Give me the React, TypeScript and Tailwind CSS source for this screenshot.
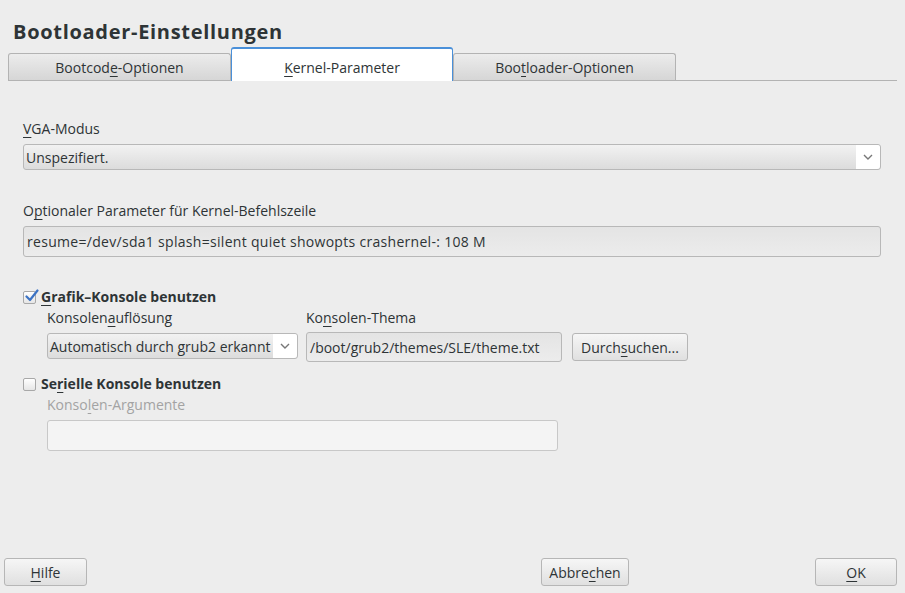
import React from 'react';

const font = { fontFamily: '"Open Sans", "DejaVu Sans", sans-serif' };

// Underlined mnemonic letter
const U: React.FC<{ children: React.ReactNode }> = ({ children }) => (
  <span className="underline decoration-1 underline-offset-[3px]">{children}</span>
);

const Chevron = () => (
  <svg width="10" height="6" viewBox="0 0 10 6" className="text-[#777]">
    <path d="M1 1 L5 5 L9 1" fill="none" stroke="currentColor" strokeWidth="1.4" />
  </svg>
);

const Combo: React.FC<{ text: string; className?: string }> = ({ text, className }) => (
  <div
    className={`flex h-[26px] items-stretch rounded-[3px] border border-[#b8b8b8] bg-gradient-to-b from-[#f2f2f2] to-[#dcdcdc] ${className ?? ''}`}
  >
    <div className="flex flex-1 items-center pl-[2px] text-[#2e3436]">{text}</div>
    <div className="flex w-[24px] items-center justify-center rounded-r-[3px] bg-white">
      <Chevron />
    </div>
  </div>
);

const Button: React.FC<{ children: React.ReactNode; className?: string }> = ({ children, className }) => (
  <button
    className={`flex h-[28px] items-center justify-center rounded-[3px] border border-[#b6b6b6] bg-gradient-to-b from-[#f6f6f6] to-[#e0e0e0] text-[#2e3436] ${className ?? ''}`}
  >
    {children}
  </button>
);

const Tab: React.FC<{ active?: boolean; children: React.ReactNode }> = ({ active, children }) =>
  active ? (
    <div className="-mb-px flex h-[34px] w-[222px] items-center justify-center rounded-t-[3px] border-x border-t-2 border-[#4a90d9] border-b-0 bg-white pt-[4px] text-[#2e3436]">
      {children}
    </div>
  ) : (
    <div className="flex h-[27px] w-[223px] items-center justify-center rounded-t-[3px] border-x border-t border-[#b3b3b3] bg-gradient-to-b from-[#ececec] to-[#d6d6d6] text-[#2e3436]">
      {children}
    </div>
  );

export default function App() {
  return (
    <div
      className="flex h-[593px] w-[905px] flex-col bg-[#ededed] text-[14px] text-[#2e3436]"
      style={font}
    >
      <h1 className="px-[13px] pt-[19px] text-[20px] font-bold leading-[26px] tracking-[0.7px] text-[#2e3436]">
        Bootloader-Einstellungen
      </h1>

      {/* Tabs */}
      <div className="mx-[8px] mt-[2px] flex items-end border-b border-[#b3b3b3]">
        <Tab>
          <span>
            Bootcod<U>e</U>-Optionen
          </span>
        </Tab>
        <Tab active>
          <span>
            <U>K</U>ernel-Parameter
          </span>
        </Tab>
        <Tab>
          <span>
            Boo<U>t</U>loader-Optionen
          </span>
        </Tab>
      </div>

      {/* Content */}
      <div className="flex flex-1 flex-col px-[23px] pr-[24px]">
        <div className="mt-[38px] leading-[20px]">
          <U>V</U>GA-Modus
        </div>
        <Combo text="Unspezifiert." className="mt-[5px]" />

        <div className="mt-[31px] leading-[20px]">
          O<U>p</U>tionaler Parameter für Kernel-Befehlszeile
        </div>
        <div className="mt-[5px] flex h-[31px] items-center rounded-[3px] border border-[#b8b8b8] bg-gradient-to-b from-[#e4e4e4] to-[#ececec] pl-[3px] tracking-[0.3px]">
          resume=/dev/sda1 splash=silent quiet showopts crashernel-: 108 M
        </div>

        {/* Grafik-Konsole */}
        <div className="mt-[30px] flex items-center gap-[5px]">
          <div className="relative h-[13px] w-[13px] rounded-[2px] border border-[#a8a8a8] bg-gradient-to-b from-white to-[#e6e6e6]">
            <svg
              width="14"
              height="13"
              viewBox="0 0 14 13"
              className="absolute -top-[3px] left-[1px]"
            >
              <path
                d="M1.5 7.5 L5 11 L12.5 1.5"
                fill="none"
                stroke="#3c73c4"
                strokeWidth="2.2"
                strokeLinecap="round"
                strokeLinejoin="round"
              />
            </svg>
          </div>
          <span className="font-bold leading-[20px]">
            <U>G</U>rafik–Konsole benutzen
          </span>
        </div>

        <div className="ml-[24px] mt-[1px] flex items-end gap-[8px]">
          <div className="flex w-[251px] flex-col">
            <div className="leading-[20px]">
              Konsolen<U>a</U>uflösung
            </div>
            <Combo text="Automatisch durch grub2 erkannt" className="mt-[5px] mb-[3px]" />
          </div>
          <div className="flex w-[256px] flex-col">
            <div className="leading-[20px]">
              Ko<U>n</U>solen-Thema
            </div>
            <div className="mt-[4px] flex h-[30px] items-center rounded-[3px] border border-[#b8b8b8] bg-gradient-to-b from-[#e4e4e4] to-[#ececec] pl-[3px]">
              /boot/grub2/themes/SLE/theme.txt
            </div>
          </div>
          <Button className="mb-[1px] ml-[2px] w-[116px]">
            <span>
              Durch<U>s</U>uchen...
            </span>
          </Button>
        </div>

        {/* Serielle Konsole */}
        <div className="mt-[12px] flex items-center gap-[5px]">
          <div className="h-[13px] w-[13px] rounded-[2px] border border-[#a8a8a8] bg-gradient-to-b from-white to-[#e6e6e6]" />
          <span className="font-bold leading-[20px]">
            Se<U>r</U>ielle Konsole benutzen
          </span>
        </div>
        <div className="ml-[24px] mt-[1px] flex w-[511px] flex-col">
          <div className="leading-[20px] text-[#a3a3a3]">
            Konso<U>l</U>en-Argumente
          </div>
          <div className="mt-[5px] h-[31px] rounded-[3px] border border-[#c8c8c8] bg-[#f4f4f4]" />
        </div>
      </div>

      {/* Bottom buttons */}
      <div className="flex items-center px-[4px] pb-[7px]">
        <Button className="w-[83px]">
          <span>
            <U>H</U>ilfe
          </span>
        </Button>
        <div className="flex-1" />
        <Button className="w-[88px]">
          <span>
            Abbre<U>c</U>hen
          </span>
        </Button>
        <div className="w-[186px]" />
        <Button className="mr-[4px] w-[82px]">
          <span>
            <U>O</U>K
          </span>
        </Button>
      </div>
    </div>
  );
}
